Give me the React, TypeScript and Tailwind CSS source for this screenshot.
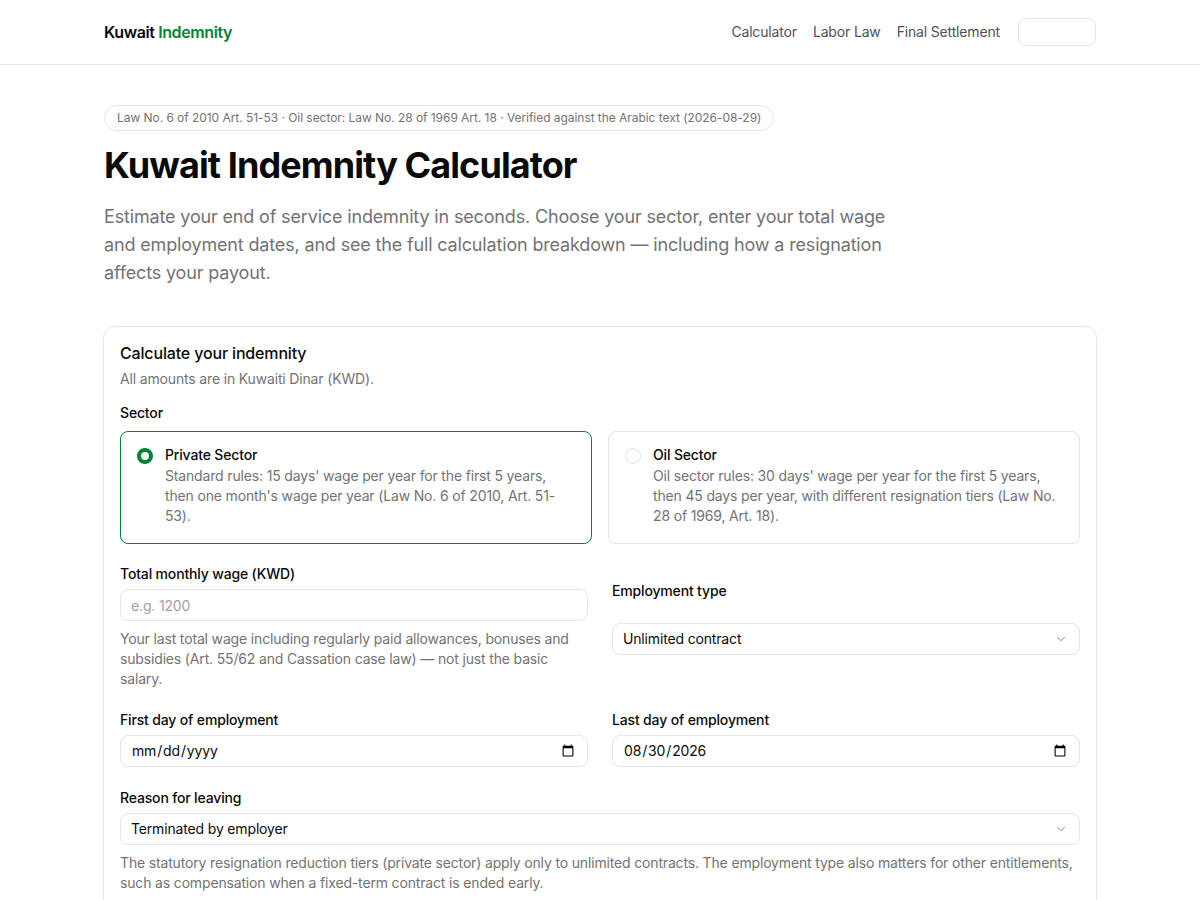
import { ChevronDown } from 'lucide-react';

function Label({ children }: { children: React.ReactNode }) {
    return <label className="block text-sm font-medium leading-5 text-neutral-950">{children}</label>;
}

function SelectBox({ value, options }: { value: string; options: string[] }) {
    return (
        <div className="relative">
            <select
                defaultValue={value}
                className="h-8 w-full appearance-none rounded-lg border border-neutral-200 bg-white px-2.5 text-sm text-neutral-950 outline-none"
            >
                {options.map((o) => (
                    <option key={o}>{o}</option>
                ))}
            </select>
            <ChevronDown size={14} strokeWidth={1.5} className="pointer-events-none absolute right-3 top-1/2 -translate-y-1/2 text-neutral-500" />
        </div>
    );
}

function SectorCard({ title, text, selected }: { title: string; text: string; selected?: boolean }) {
    return (
        <div
            className={
                selected
                    ? 'flex gap-3 rounded-lg border border-green-700 px-4 pb-[17px] pt-[13px]'
                    : 'flex gap-3 rounded-lg border border-neutral-200 px-4 pb-[17px] pt-[13px]'
            }
        >
            <span
                className={
                    selected
                        ? 'mt-[3px] h-4 w-4 shrink-0 rounded-full border-[4px] border-green-700 bg-white'
                        : 'mt-[3px] h-4 w-4 shrink-0 rounded-full border border-neutral-200 bg-white'
                }
            />
            <div>
                <div className="text-sm font-medium leading-5 text-neutral-950">{title}</div>
                <p className="mt-px text-sm leading-5 text-neutral-500">{text}</p>
            </div>
        </div>
    );
}

export default function App() {
    return (
        <div
            className="min-h-screen bg-white tracking-[-0.01em] text-neutral-950"
            style={{ fontFamily: 'Inter, "Noto Sans", sans-serif' }}
        >
            {/* Header */}
            <header className="border-b border-neutral-200">
                <div className="mx-auto flex h-16 max-w-[992px] items-center justify-between">
                    <div className="text-base font-semibold tracking-tight">
                        Kuwait <span className="text-green-700">Indemnity</span>
                    </div>
                    <nav className="flex items-center gap-4 text-sm text-neutral-600">
                        <a href="#">Calculator</a>
                        <a href="#">Labor Law</a>
                        <a href="#">Final Settlement</a>
                        <button className="ml-0.5 h-7 w-[78px] rounded-lg border border-neutral-200 bg-white" />
                    </nav>
                </div>
            </header>

            <main className="mx-auto max-w-[994px] px-px pt-[39px]">
                {/* Hero */}
                <span className="inline-flex h-[26px] items-center rounded-full border border-neutral-200 px-3 text-xs tracking-[-0.004em] text-neutral-500">
                    Law No. 6 of 2010 Art. 51-53 · Oil sector: Law No. 28 of 1969 Art. 18 · Verified against the Arabic text (2026-08-29)
                </span>
                <h1 className="mt-[14px] text-4xl font-bold leading-10 tracking-tight">Kuwait Indemnity Calculator</h1>
                <p className="mt-[18px] max-w-[784px] text-lg leading-7 text-neutral-500">
                    Estimate your end of service indemnity in seconds. Choose your sector, enter your total wage and employment dates, and see the full calculation breakdown — including how a resignation affects your payout.
                </p>

                {/* Calculator card */}
                <section className="-mx-px mt-[39px] rounded-xl border border-neutral-200 px-4 pb-6 pt-[14px]">
                    <h2 className="text-base font-medium leading-6">Calculate your indemnity</h2>
                    <p className="mt-1 text-sm leading-5 text-neutral-500">All amounts are in Kuwaiti Dinar (KWD).</p>

                    <div className="mt-[14px]">
                        <Label>Sector</Label>
                        <div className="mt-2 grid grid-cols-2 gap-4">
                            <SectorCard
                                selected
                                title="Private Sector"
                                text="Standard rules: 15 days' wage per year for the first 5 years, then one month's wage per year (Law No. 6 of 2010, Art. 51-53)."
                            />
                            <SectorCard
                                title="Oil Sector"
                                text="Oil sector rules: 30 days' wage per year for the first 5 years, then 45 days per year, with different resignation tiers (Law No. 28 of 1969, Art. 18)."
                            />
                        </div>
                    </div>

                    <div className="mt-5 grid grid-cols-2 gap-6">
                        <div>
                            <Label>Total monthly wage (KWD)</Label>
                            <input
                                placeholder="e.g. 1200"
                                className="mt-[5px] h-8 w-full rounded-lg border border-neutral-200 px-2.5 text-sm outline-none placeholder:text-neutral-400"
                            />
                            <p className="mt-2 text-sm leading-5 text-neutral-500">
                                Your last total wage including regularly paid allowances, bonuses and subsidies (Art. 55/62 and Cassation case law) — not just the basic salary.
                            </p>
                        </div>
                        <div className="pt-[17px]">
                            <Label>Employment type</Label>
                            <div className="mt-[22px]">
                                <SelectBox value="Unlimited contract" options={['Unlimited contract', 'Fixed-term contract']} />
                            </div>
                        </div>
                    </div>

                    <div className="mt-[21px] grid grid-cols-2 gap-6">
                        <div>
                            <Label>First day of employment</Label>
                            <input type="date" className="mt-[5px] h-8 w-full rounded-lg border border-neutral-200 px-2.5 text-sm outline-none" />
                        </div>
                        <div>
                            <Label>Last day of employment</Label>
                            <input
                                type="date"
                                defaultValue="2026-08-30"
                                className="mt-[5px] h-8 w-full rounded-lg border border-neutral-200 px-2.5 text-sm outline-none"
                            />
                        </div>
                    </div>

                    <div className="mt-[21px]">
                        <Label>Reason for leaving</Label>
                        <div className="mt-[5px]">
                            <SelectBox value="Terminated by employer" options={['Terminated by employer', 'Resignation', 'End of contract']} />
                        </div>
                        <p className="mt-2 text-sm leading-5 text-neutral-500">
                            The statutory resignation reduction tiers (private sector) apply only to unlimited contracts. The employment type also matters for other entitlements, such as compensation when a fixed-term contract is ended early.
                        </p>
                    </div>
                </section>
            </main>
        </div>
    );
}
